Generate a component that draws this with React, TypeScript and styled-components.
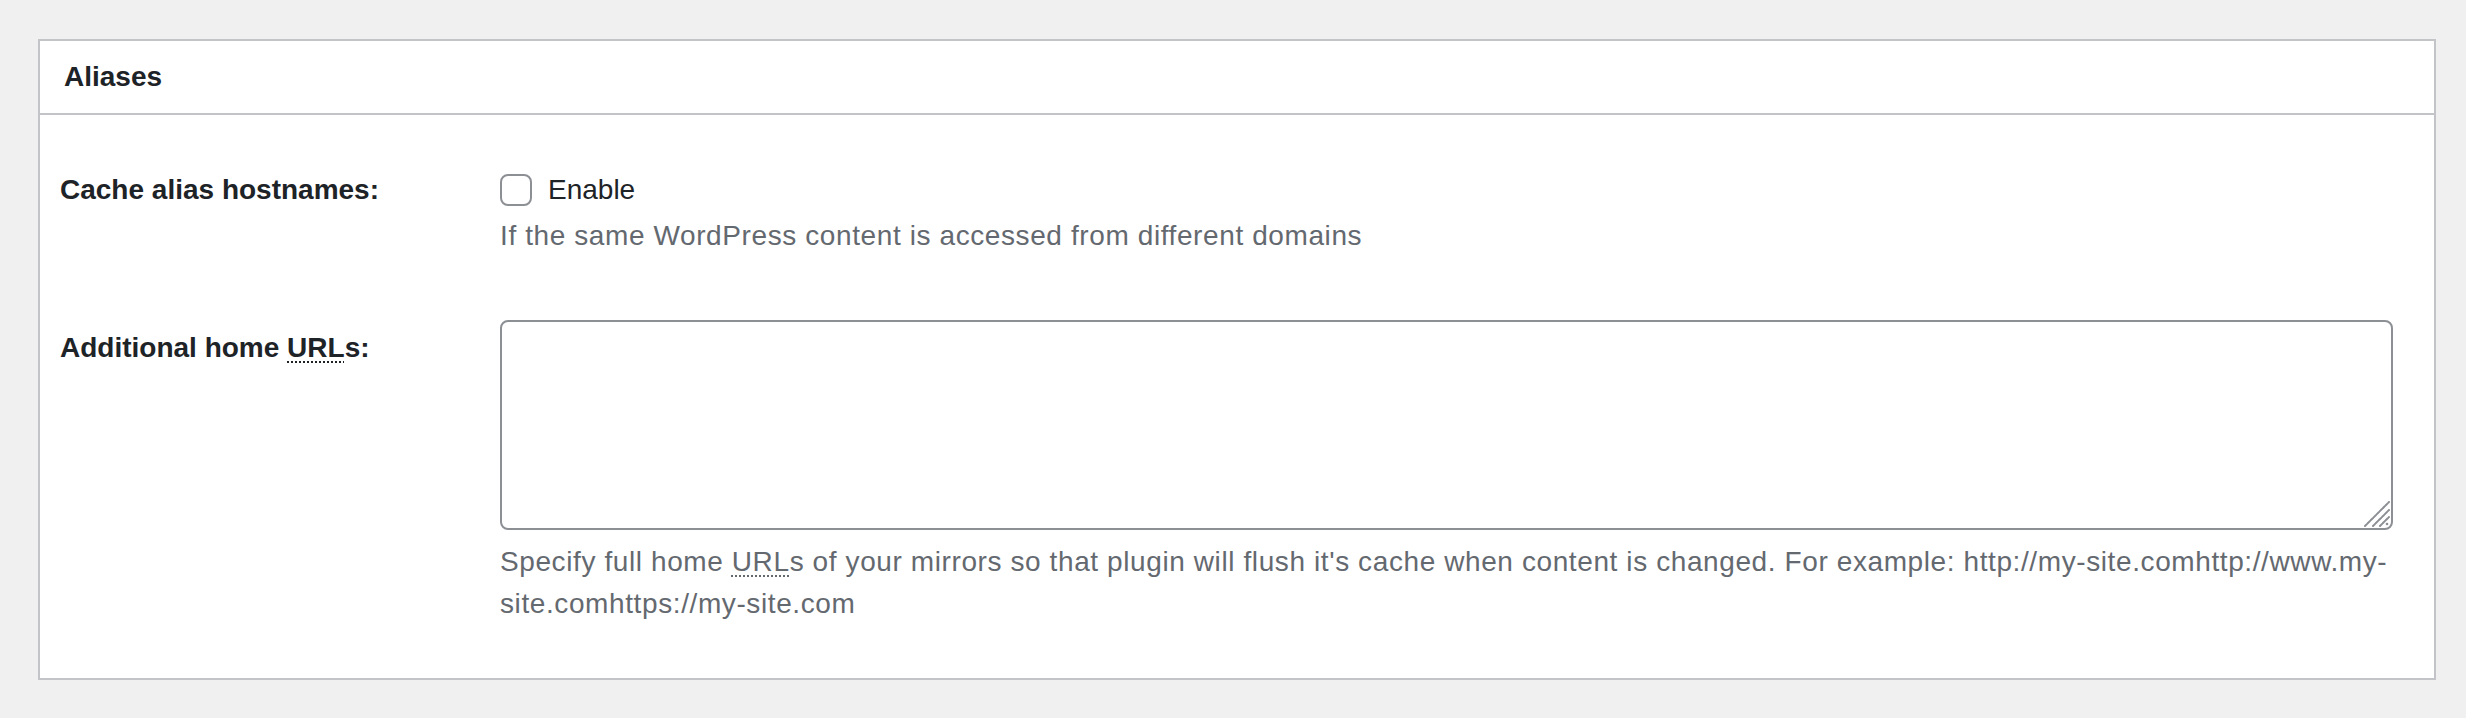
import React from "react";
import styled, { createGlobalStyle } from "styled-components";

const Global = createGlobalStyle`
  html, body { margin: 0; padding: 0; background: #f0f0f1; }
  body { font-family: "Liberation Sans", Arial, sans-serif; color: #1d2327; }
  * { box-sizing: border-box; }
`;

const Page = styled.div`
  padding: 39px 30px 39px 38px;
`;

const Card = styled.section`
  background: #fff;
  border: 2px solid #c3c4c7;
`;

const Header = styled.div`
  display: flex;
  align-items: center;
  height: 74px;
  padding: 0 24px;
  border-bottom: 2px solid #c3c4c7;
`;

const Title = styled.h3`
  margin: 0;
  font-size: 28px;
  font-weight: 700;
  line-height: 1.4;
`;

const Body = styled.div`
  padding: 17px 41px 20px 20px;
`;

const Row = styled.div`
  display: grid;
  grid-template-columns: 440px 1fr;
`;

const Label = styled.div`
  padding: 40px 0;
  font-size: 28px;
  font-weight: 700;
  line-height: 1.3;
  color: #1d2327;
`;

const Field = styled.div`
  padding: 30px 0 33px;
  font-size: 28px;
  line-height: 1.5;
  color: #1d2327;
`;

const CheckLabel = styled.label`
  display: flex;
  align-items: center;
  gap: 16px;
  height: 40px;
  margin-top: 8px;
`;

const Box = styled.input`
  appearance: none;
  margin: 0;
  width: 32px;
  height: 32px;
  border: 2px solid #8c8f94;
  border-radius: 8px;
  background: #fff;
`;

const Description = styled.p`
  margin: ${(p: { $gap: number }) => p.$gap}px 0 0;
  font-size: 28px;
  line-height: 1.5;
  letter-spacing: 0.6px;
  color: #646970;
`;

const AreaWrap = styled.div`
  position: relative;
`;

const Area = styled.textarea`
  display: block;
  width: 100%;
  height: 210px;
  margin: 0;
  border: 2px solid #8c8f94;
  border-radius: 8px;
  background: #fff;
  font: inherit;
  resize: none;
`;

const Grip = styled.svg`
  position: absolute;
  right: 3px;
  bottom: 3px;
  width: 26px;
  height: 26px;
  pointer-events: none;
`;

const Abbr = styled.abbr`
  text-decoration: underline dotted;
  text-underline-offset: 4px;
  text-decoration-thickness: 2px;
`;

export default function App() {
  return (
    <>
      <Global />
      <Page>
        <Card>
          <Header>
            <Title>Aliases</Title>
          </Header>
          <Body>
            <Row>
              <Label>Cache alias hostnames:</Label>
              <Field>
                <CheckLabel>
                  <Box type="checkbox" />
                  Enable
                </CheckLabel>
                <Description $gap={5}>
                  If the same WordPress content is accessed from different domains
                </Description>
              </Field>
            </Row>
            <Row>
              <Label>
                Additional home <Abbr title="Uniform Resource Locator">URL</Abbr>s:
              </Label>
              <Field>
                <AreaWrap>
                  <Area />
                  <Grip viewBox="0 0 26 26">
                    <g stroke="#8c8f94" strokeWidth="2" strokeLinecap="round" strokeDasharray="3 1.2">
                      <line x1="1" y1="25" x2="25" y2="1" />
                      <line x1="9" y1="25" x2="25" y2="9" />
                      <line x1="16" y1="25" x2="25" y2="16" />
                    </g>
                    <circle cx="23" cy="23" r="1.3" fill="#8c8f94" />
                  </Grip>
                </AreaWrap>
                <Description $gap={11}>
                  Specify full home <Abbr title="Uniform Resource Locator">URL</Abbr>s of
                  your mirrors so that plugin will flush it's cache when content is
                  changed. For example: http://my-site.comhttp://www.my-site.comhttps://my-site.com
                </Description>
              </Field>
            </Row>
          </Body>
        </Card>
      </Page>
    </>
  );
}
